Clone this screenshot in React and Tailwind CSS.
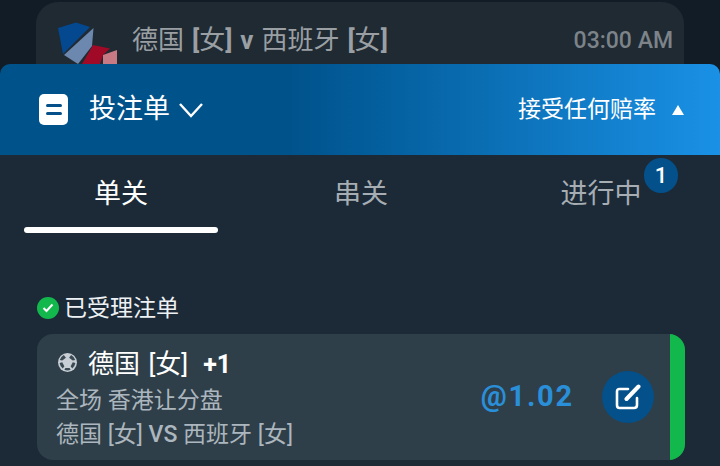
import React from "react";

const cjk = { fontFamily: 'Roboto, "Noto Sans CJK SC", sans-serif' };

function TeamLogo() {
  return (
    <svg width="62" height="44" viewBox="56 20 62 44" className="shrink-0">
      <path d="M58 28 L76 22.5 L90 27 L63 54 Z" fill="#04488f" />
      <path d="M93.500 28 L92 46 L78 64 L64 55 Z" fill="#6d88ae" />
      <path d="M82 64 L93 45 L110 48.500 L103 55 L100 64 Z" fill="#a00a26" />
      <path d="M117 50 L117 64 L103 64 L103 55 Z" fill="#c87a84" />
    </svg>
  );
}

function BetslipIcon() {
  return (
    <div className="flex h-[31px] w-[29px] flex-col items-center justify-center gap-[5px] rounded-[5px] bg-white">
      <div className="h-[3px] w-[16px] rounded-full bg-[#06508a]" />
      <div className="h-[3px] w-[16px] rounded-full bg-[#06508a]" />
    </div>
  );
}

function SoccerBall() {
  return (
    <svg width="21" height="21" viewBox="0 0 20 20" fill="none" className="-mt-[3px] shrink-0">
      <circle cx="10" cy="10" r="9" fill="#c9d0d5" />
      <path d="M6.500 2.800 L8.500 5.500 L5 8 L2.600 7.500 Q3.600 4.500 6.500 2.800 Z" fill="#3a4a55" />
      <path d="M13.500 2.800 L11.500 5.500 L15 8 L17.400 7.500 Q16.400 4.500 13.500 2.800 Z" fill="#3a4a55" />
      <path d="M2.500 10.500 L5 9.800 L7 13.500 L5.500 15.800 Q3 14 2.500 10.500 Z" fill="#3a4a55" />
      <path d="M17.500 10.500 L15 9.800 L13 13.500 L14.500 15.800 Q17 14 17.500 10.500 Z" fill="#3a4a55" />
      <path d="M8 15.300 L12 15.300 L13 17 Q10 18 7 17 Z" fill="#3a4a55" />
    </svg>
  );
}

function EditIcon() {
  return (
    <svg width="26" height="26" viewBox="0 0 26 26" fill="none" stroke="white" strokeWidth="2.600" strokeLinecap="round" strokeLinejoin="round">
      <path d="M13 5 H4.500 Q2 5 2 7.500 V21 Q2 24 4.500 24 H19 Q22 24 22 21 V14" />
      <path d="M11.500 15 L23.500 2.500" strokeWidth="4" />
    </svg>
  );
}

export default function App() {
  return (
    <div className="h-[466px] w-[720px] overflow-hidden bg-[#121c26]" style={cjk}>
      <div className="mx-[36px] mt-[2px] flex h-[62px] items-start overflow-hidden rounded-t-[22px] bg-[#1f2a33] pl-[20px] pr-[11px] pt-[18px]">
        <TeamLogo />
        <div className="ml-[14px] mt-[1px] text-[26px] leading-[38px] text-[#9a9fa3] [word-spacing:1.500px]">
          德国 <b>[</b>女<b>]</b> <b>v</b> 西班牙 <b>[</b>女<b>]</b>
        </div>
        <div className="ml-auto mt-[3px] text-[23px] font-medium leading-[36px] text-[#7c8389]">03:00 AM</div>
      </div>

      <div className="flex h-[91px] items-center rounded-t-[10px] bg-linear-to-r from-[#00528b] from-[40%] to-[#1a91e6] pl-[39px] pr-[36px]">
        <BetslipIcon />
        <span className="ml-[21px] text-[27px] leading-none text-white">投注单</span>
        <svg width="26" height="16" viewBox="0 0 26 16" fill="none" stroke="white" strokeWidth="2.400" className="ml-[8px]">
          <path d="M2 2 L13 14 L24 2" />
        </svg>
        <span className="ml-auto text-[23px] leading-none text-white">接受任何赔率</span>
        <div className="ml-[16px] h-0 w-0 border-x-[6.500px] border-b-[10px] border-x-transparent border-b-white" />
      </div>

      <div className="h-[311px] bg-[#1c2a38] pl-[37px] pr-[35px]">
        <div className="-ml-[37px] -mr-[35px] grid h-[78px] grid-cols-3">
          <div className="flex flex-col items-center">
            <div className="pl-[2px] pt-[20px] text-[27px] leading-[38px] text-white">单关</div>
            <div className="ml-[2px] mt-[14px] h-[6px] w-[194px] rounded-full bg-white" />
          </div>
          <div className="pl-[2px] pt-[20px] text-center text-[27px] leading-[38px] text-[#a6adb3]">串关</div>
          <div className="relative pl-[2px] pt-[20px] text-center text-[27px] leading-[38px] text-[#a6adb3]">
            进行中
            <div className="absolute left-[164px] top-[3px] flex h-[35px] w-[34px] items-center justify-center rounded-full bg-[#03508a] text-[22px] font-medium text-white">
              1
            </div>
          </div>
        </div>

        <div className="mt-[60px] flex h-[30px] items-center">
          <div className="flex h-[22px] w-[22px] items-center justify-center rounded-full bg-[#12b84c]">
            <svg width="12" height="10" viewBox="0 0 12 10" fill="none" stroke="white" strokeWidth="2">
              <path d="M1.500 5 L4.500 8 L10.500 1.500" />
            </svg>
          </div>
          <span className="ml-[5px] text-[23px] leading-none text-[#eef1f3]">已受理注单</span>
        </div>

        <div className="mt-[11px] flex h-[126px] overflow-hidden rounded-[16px] bg-[#2f3f49]">
          <div className="flex-1 pl-[20px] pt-[12px]">
            <div className="flex h-[36px] items-center">
              <SoccerBall />
              <span className="ml-[10px] text-[26px] leading-none text-white [word-spacing:2px]">
                德国 [女]
              </span>
              <span className="ml-[15px] text-[25px] font-bold leading-none text-white">+1</span>
            </div>
            <div className="-ml-[1px] mt-[1px] text-[23px] leading-[36px] text-[#acb6be]">全场 香港让分盘</div>
            <div className="-ml-[1px] -mt-[1px] text-[23px] leading-[34px] text-[#acb6be]">
              德国 [女] <span className="font-medium">VS</span> 西班牙 [女]
            </div>
          </div>
          <div className="flex items-center pr-[16px]">
            <span className="text-[29px] font-bold tracking-[1.800px] text-[#2a8fd9]">@1.02</span>
            <div className="ml-[28px] flex h-[52px] w-[52px] items-center justify-center rounded-full bg-[#03508a]">
              <EditIcon />
            </div>
          </div>
          <div className="w-[15px] bg-[#12b84c]" />
        </div>
      </div>
    </div>
  );
}
